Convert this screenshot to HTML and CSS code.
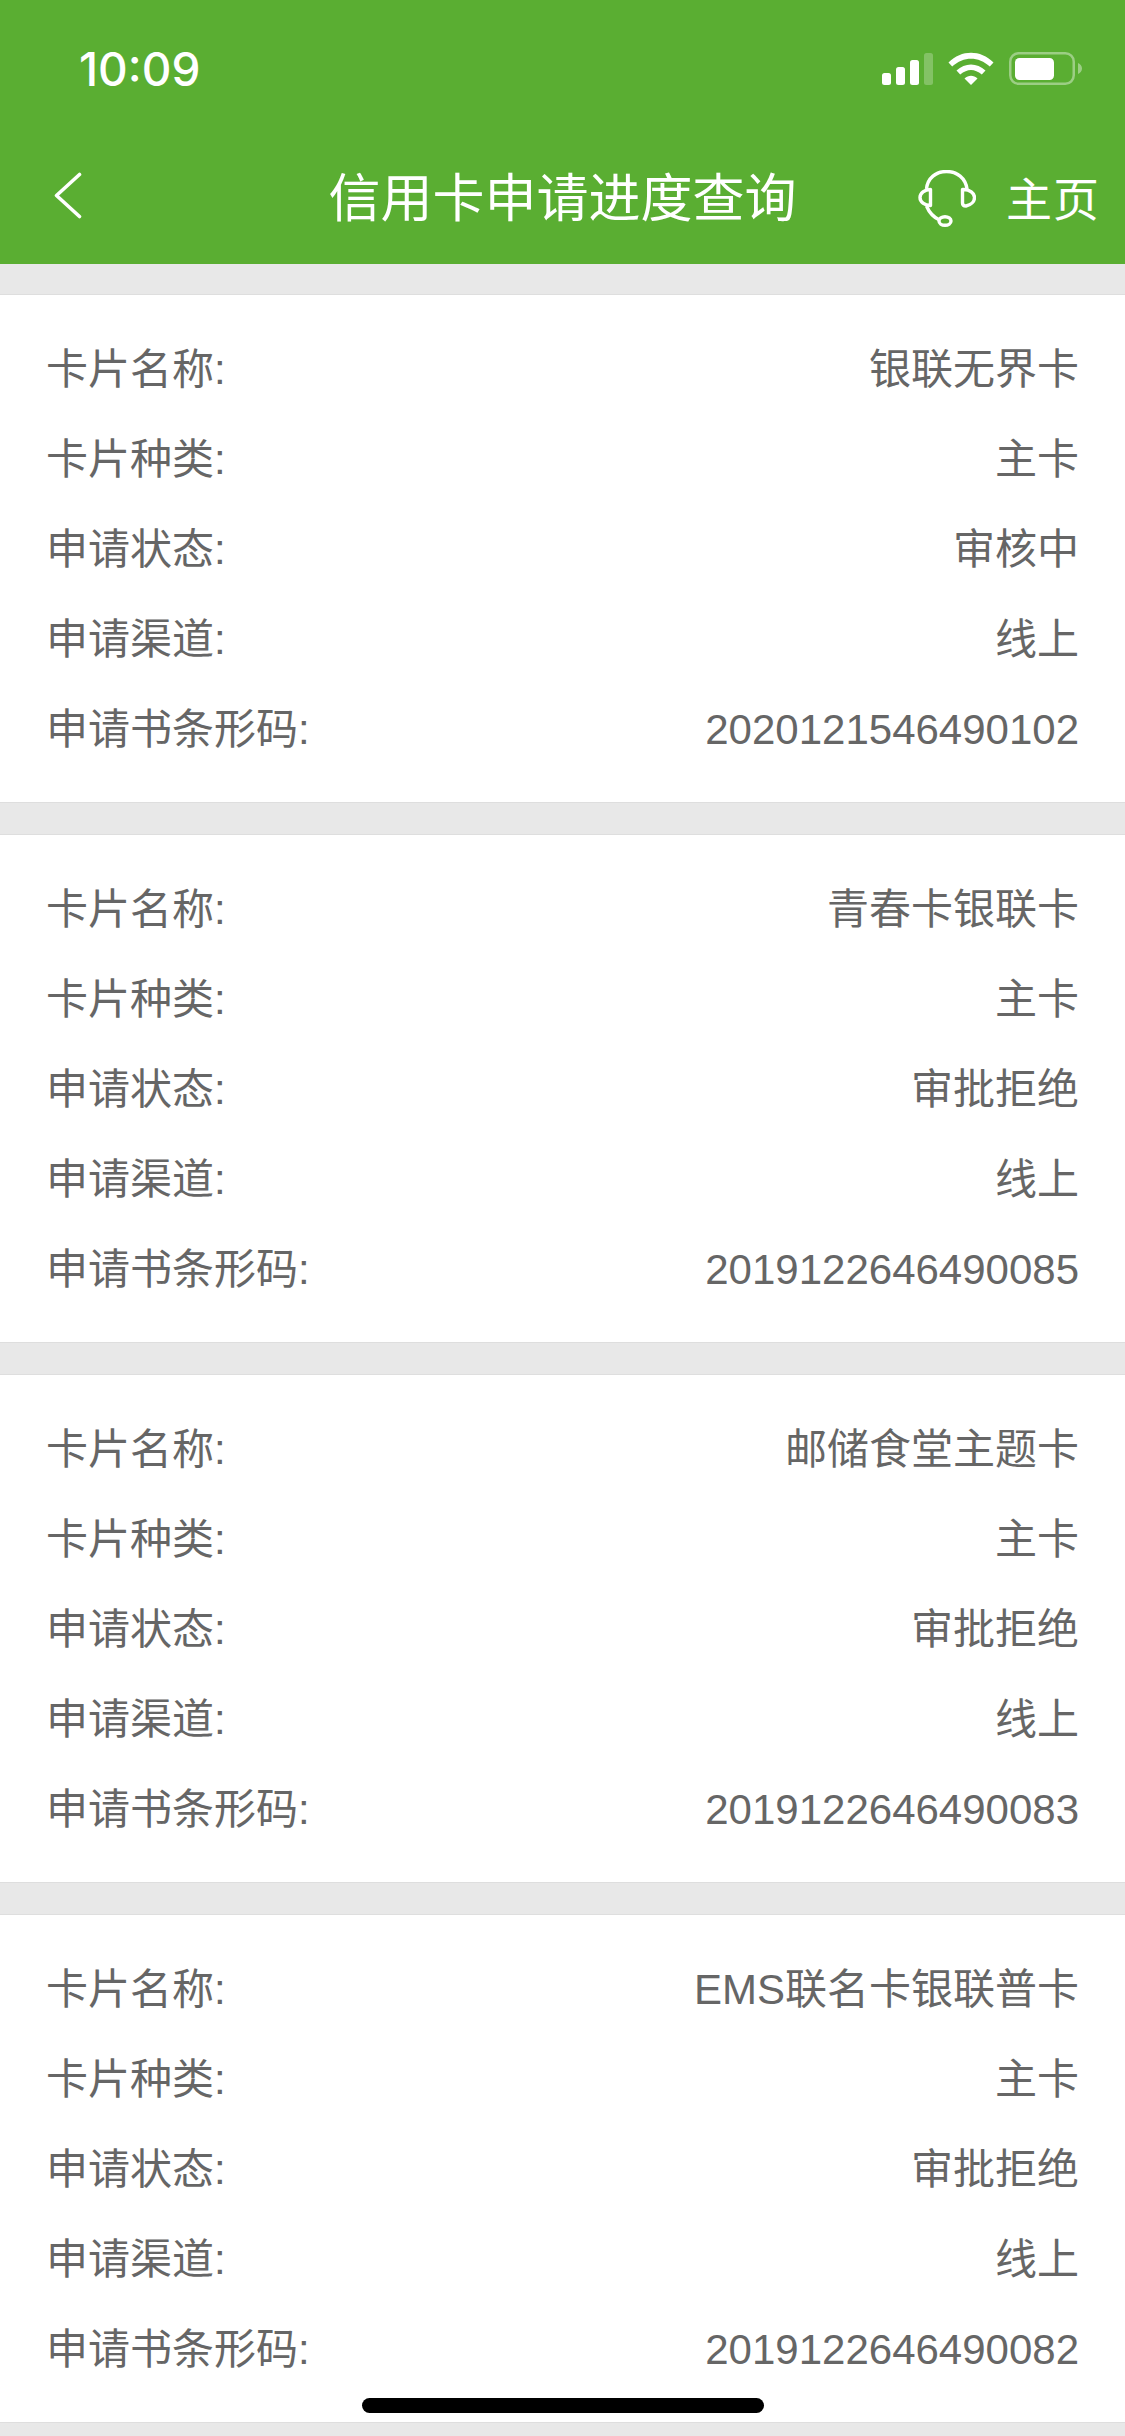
FILE: index.html
```html
<!DOCTYPE html>
<html lang="zh-CN">
<head>
    <meta charset="UTF-8">
    <meta name="viewport" content="width=device-width, initial-scale=1.0">
    <title>信用卡申请进度查询</title>
    <link rel="stylesheet" href="styles.css">
</head>
<body>
    <header class="header">
        <div class="status-bar">
            <span class="time">10:09</span>
            <div class="status-icons">
                <svg class="signal" width="51" height="32" viewBox="0 0 51 32">
                    <rect x="0" y="20" width="9" height="12" rx="2.5" fill="#fff"/>
                    <rect x="14" y="14" width="9" height="18" rx="2.5" fill="#fff"/>
                    <rect x="28" y="7" width="9" height="25" rx="2.5" fill="#fff"/>
                    <rect x="42" y="0" width="9" height="32" rx="2.5" fill="#fff" fill-opacity="0.25"/>
                </svg>
                <svg class="wifi" width="46" height="33" viewBox="0 0 46 33">
                    <path d="M0.5 10.5C13.5 -2.5 32.5 -2.5 45.5 10.5L41.8 14.6C30.5 4 15.5 4 4.2 14.6Z" fill="#fff"/>
                    <path d="M8.5 18.6C17 10.6 29 10.6 37.5 18.6L33.8 22.6C26.5 16.5 19.5 16.5 12.2 22.6Z" fill="#fff"/>
                    <path d="M16.5 26.4C20.5 23 25.5 23 29.5 26.4L23 33Z" fill="#fff"/>
                </svg>
                <svg class="battery" width="73" height="33" viewBox="0 0 73 33">
                    <rect x="1.25" y="1.25" width="63.5" height="30.5" rx="8.5" fill="none" stroke="#fff" stroke-opacity="0.4" stroke-width="2.5"/>
                    <rect x="6" y="6" width="39" height="22" rx="4.5" fill="#fff"/>
                    <path d="M69 11C71.5 12 73 14 73 16.500C73 19 71.500 21 69 22Z" fill="#fff" fill-opacity="0.4"/>
                </svg>
            </div>
        </div>
        <nav class="nav-bar">
            <div class="nav-left">
                <svg class="back" width="29" height="47" viewBox="0 0 29 47">
                    <path d="M26.500 2.500L3.500 23.500L26.500 44.500" fill="none" stroke="#fff" stroke-width="3.600" stroke-linecap="round" stroke-linejoin="round"/>
                </svg>
            </div>
            <h1 class="nav-title">信用卡申请进度查询</h1>
            <div class="nav-right">
                <svg class="headset" width="58" height="57" viewBox="0 0 58 57">
                    <path d="M8.500 19C9.500 8 18 1.500 28.500 1.500C39 1.500 47.500 8 49 19" fill="none" stroke="#fff" stroke-width="3.400"/>
                    <path d="M12.500 19.500V35.500C6.500 35.500 2 32 2 27.500C2 23 6.500 19.500 12.500 19.500Z" fill="none" stroke="#fff" stroke-width="3.400" stroke-linejoin="round"/>
                    <path d="M44.500 19.500V33C44.500 35 46 36 48 36C53 35 56.500 31.500 56.500 27.500C56.500 23 51.500 19.500 46 19.500Z" fill="none" stroke="#fff" stroke-width="3.400" stroke-linejoin="round"/>
                    <path d="M8.500 36C11 42 15 47 21.500 50" fill="none" stroke="#fff" stroke-width="3.400"/>
                    <ellipse cx="27" cy="51" rx="6" ry="4.300" fill="none" stroke="#fff" stroke-width="3.400"/>
                </svg>
                <span class="home-link">主页</span>
            </div>
        </nav>
    </header>

    <main class="list">
        <section class="card">
            <div class="row"><span>卡片名称:</span><span>银联无界卡</span></div>
            <div class="row"><span>卡片种类:</span><span>主卡</span></div>
            <div class="row"><span>申请状态:</span><span>审核中</span></div>
            <div class="row"><span>申请渠道:</span><span>线上</span></div>
            <div class="row"><span>申请书条形码:</span><span>2020121546490102</span></div>
        </section>
        <section class="card">
            <div class="row"><span>卡片名称:</span><span>青春卡银联卡</span></div>
            <div class="row"><span>卡片种类:</span><span>主卡</span></div>
            <div class="row"><span>申请状态:</span><span>审批拒绝</span></div>
            <div class="row"><span>申请渠道:</span><span>线上</span></div>
            <div class="row"><span>申请书条形码:</span><span>2019122646490085</span></div>
        </section>
        <section class="card">
            <div class="row"><span>卡片名称:</span><span>邮储食堂主题卡</span></div>
            <div class="row"><span>卡片种类:</span><span>主卡</span></div>
            <div class="row"><span>申请状态:</span><span>审批拒绝</span></div>
            <div class="row"><span>申请渠道:</span><span>线上</span></div>
            <div class="row"><span>申请书条形码:</span><span>2019122646490083</span></div>
        </section>
        <section class="card">
            <div class="row"><span>卡片名称:</span><span>EMS联名卡银联普卡</span></div>
            <div class="row"><span>卡片种类:</span><span>主卡</span></div>
            <div class="row"><span>申请状态:</span><span>审批拒绝</span></div>
            <div class="row"><span>申请渠道:</span><span>线上</span></div>
            <div class="row"><span>申请书条形码:</span><span>2019122646490082</span></div>
        </section>
    </main>

    <div class="home-indicator"></div>
</body>
</html>
```

FILE: styles.css
```css
html, body {
    margin: 0;
    height: 2436px;
    overflow: hidden;
}
body {
    position: relative;
    background: #e8e8e8;
    color: #666;
    font-family: "Liberation Sans", "Noto Sans CJK SC", sans-serif;
}
.header {
    height: 264px;
    background: #5aae32;
    color: #fff;
}
.status-bar {
    height: 132px;
    box-sizing: border-box;
    padding: 5px 43px 0 79px;
    display: flex;
    justify-content: space-between;
    align-items: center;
}
.time {
    font-family: Inter, sans-serif;
    font-size: 46px;
    font-weight: 500;
}
.status-icons {
    display: flex;
    align-items: center;
    gap: 15px;
}
.nav-bar {
    height: 132px;
    box-sizing: border-box;
    padding: 0 28px;
    display: grid;
    grid-template-columns: 1fr auto 1fr;
    align-items: center;
}
.nav-left {
    display: flex;
    padding: 0 0 6px 25px;
}
.nav-title {
    margin: 2px 0 0;
    font-size: 52px;
    font-weight: 400;
    line-height: 1;
}
.nav-right {
    display: flex;
    justify-content: flex-end;
    align-items: center;
    gap: 30px;
    margin-right: -3px;
}
.home-link {
    margin-bottom: 4px;
    font-size: 46px;
    letter-spacing: 1px;
}
.list {
    padding-top: 30px;
    display: flex;
    flex-direction: column;
    gap: 31px;
}
.card {
    background: #fff;
    border-top: 1px solid #dedede;
    border-bottom: 1px solid #dedede;
    padding: 30px 46px 27px 46px;
}
.row {
    height: 90px;
    line-height: 90px;
    display: flex;
    justify-content: space-between;
    align-items: baseline;
    font-size: 42px;
}
.home-indicator {
    position: absolute;
    left: 362px;
    top: 2398px;
    width: 402px;
    height: 15px;
    border-radius: 8px;
    background: #000;
}
```
